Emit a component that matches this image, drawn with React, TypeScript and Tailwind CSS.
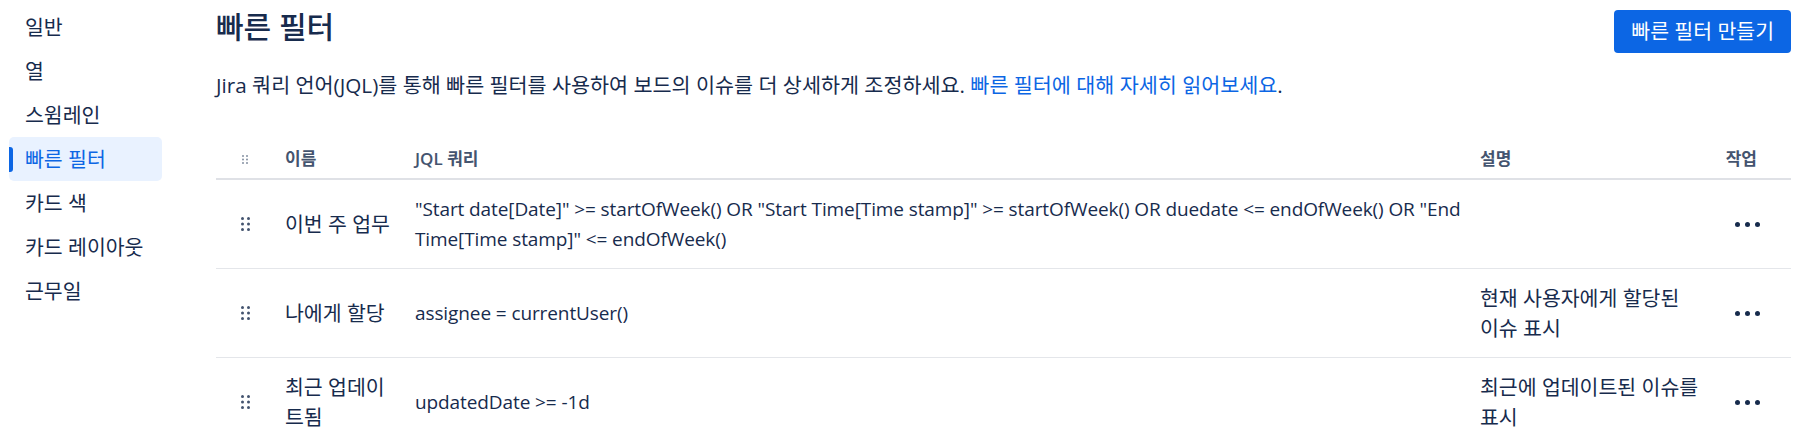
const FONT = "font-['Open_Sans','Noto_Sans_CJK_KR',sans-serif]"

const navItems = ['일반', '열', '스윔레인', '빠른 필터', '카드 색', '카드 레이아웃', '근무일']

type Filter = {
  name: string
  jql: string
  description?: string
}

const filters: Filter[] = [
  {
    name: '이번 주 업무',
    jql: '"Start date[Date]" >= startOfWeek() OR "Start Time[Time stamp]" >= startOfWeek() OR duedate <= endOfWeek() OR "End Time[Time stamp]" <= endOfWeek()',
  },
  { name: '나에게 할당', jql: 'assignee = currentUser()', description: '현재 사용자에게 할당된 이슈 표시' },
  { name: '최근 업데이트됨', jql: 'updatedDate >= -1d', description: '최근에 업데이트된 이슈를 표시' },
]

function DragHandle(props: { small?: boolean }) {
  if (props.small) {
    return (
      <svg width="6" height="9" viewBox="0 0 6 9" className="text-[#8590a2]">
        {[1, 4.5, 8].map((cy) => (
          <g key={cy}>
            <circle cx="1" cy={cy} r="1" fill="currentColor" />
            <circle cx="5" cy={cy} r="1" fill="currentColor" />
          </g>
        ))}
      </svg>
    )
  }
  return (
    <svg width="9" height="14" viewBox="0 0 9 14" className="text-[#44546f]">
      {[1.5, 7, 12.5].map((cy) => (
        <g key={cy}>
          <circle cx="1.5" cy={cy} r="1.5" fill="currentColor" />
          <circle cx="7.5" cy={cy} r="1.5" fill="currentColor" />
        </g>
      ))}
    </svg>
  )
}

function MoreIcon() {
  return (
    <svg width="25" height="5" viewBox="0 0 25 5" className="text-[#172b4d]">
      <circle cx="2.5" cy="2.5" r="2.5" fill="currentColor" />
      <circle cx="12.5" cy="2.5" r="2.5" fill="currentColor" />
      <circle cx="22.5" cy="2.5" r="2.5" fill="currentColor" />
    </svg>
  )
}

export default function App() {
  return (
    <div className={`${FONT} flex h-[442px] w-[1806px] overflow-hidden bg-white text-[20.5px] text-[#172b4d]`}>
      {/* 사이드 메뉴 */}
      <nav className="w-[216px] shrink-0 pt-[5px] pl-[9px]">
        <ul className="w-[153px]">
          {navItems.map((item) => {
            const active = item === '빠른 필터'
            return (
              <li
                key={item}
                className={`relative flex h-11 items-center rounded-[5px] pl-4 ${
                  active ? 'bg-[#e9f2ff] text-[#0c66e4]' : ''
                }`}
              >
                {active && (
                  <span className="absolute top-[10px] left-0 h-[25px] w-1 rounded-r-[3px] bg-[#0c66e4]" />
                )}
                {item}
              </li>
            )
          })}
        </ul>
      </nav>

      {/* 본문 */}
      <main className="w-[1575px] shrink-0">
        <div className="flex items-start justify-between pt-[10px]">
          <h1 className="text-[30px] leading-[33px] font-medium">빠른 필터</h1>
          <button className="h-[43px] rounded-[4px] bg-[#0c66e4] px-[17px] text-white">빠른 필터 만들기</button>
        </div>

        <p className="mt-[17px] text-[20.7px] leading-[30px]">
          Jira 쿼리 언어(JQL)를 통해 빠른 필터를 사용하여 보드의 이슈를 더 상세하게 조정하세요.{' '}
          <a className="text-[#0c66e4]">빠른 필터에 대해 자세히 읽어보세요</a>.
        </p>

        <div className="mt-10 grid grid-cols-[58px_141px_1065px_245px_66px]">
          {/* 헤더 */}
          <div className="contents text-[17px] font-semibold whitespace-nowrap text-[#44546f]">
            <div className="flex h-10 items-center justify-center border-b-2 border-[#dfe1e6]">
              <DragHandle small />
            </div>
            <div className="flex h-10 items-center border-b-2 border-[#dfe1e6] pl-[11px]">이름</div>
            <div className="flex h-10 items-center border-b-2 border-[#dfe1e6]">JQL 쿼리</div>
            <div className="flex h-10 items-center border-b-2 border-[#dfe1e6]">설명</div>
            <div className="flex h-10 items-center justify-end border-b-2 border-[#dfe1e6] pr-[34px]">작업</div>
          </div>

          {filters.map((f) => (
            <div key={f.name} className="contents leading-[30px]">
              <div className="flex items-center justify-center border-b border-[#e4e6ea] py-[14px]">
                <DragHandle />
              </div>
              <div className="flex items-center border-b border-[#e4e6ea] py-[14px] pr-[20px] pl-[11px]">{f.name}</div>
              <div className="flex min-h-[89px] items-center border-b border-[#e4e6ea] py-[14px] text-[19px] tracking-[-0.1px]">
                {f.jql}
              </div>
              <div className="flex items-center border-b border-[#e4e6ea] py-[14px] pr-[15px] break-keep">
                {f.description}
              </div>
              <div className="flex items-center justify-end border-b border-[#e4e6ea] py-[14px] pr-[31px]">
                <MoreIcon />
              </div>
            </div>
          ))}
        </div>
      </main>
    </div>
  )
}
